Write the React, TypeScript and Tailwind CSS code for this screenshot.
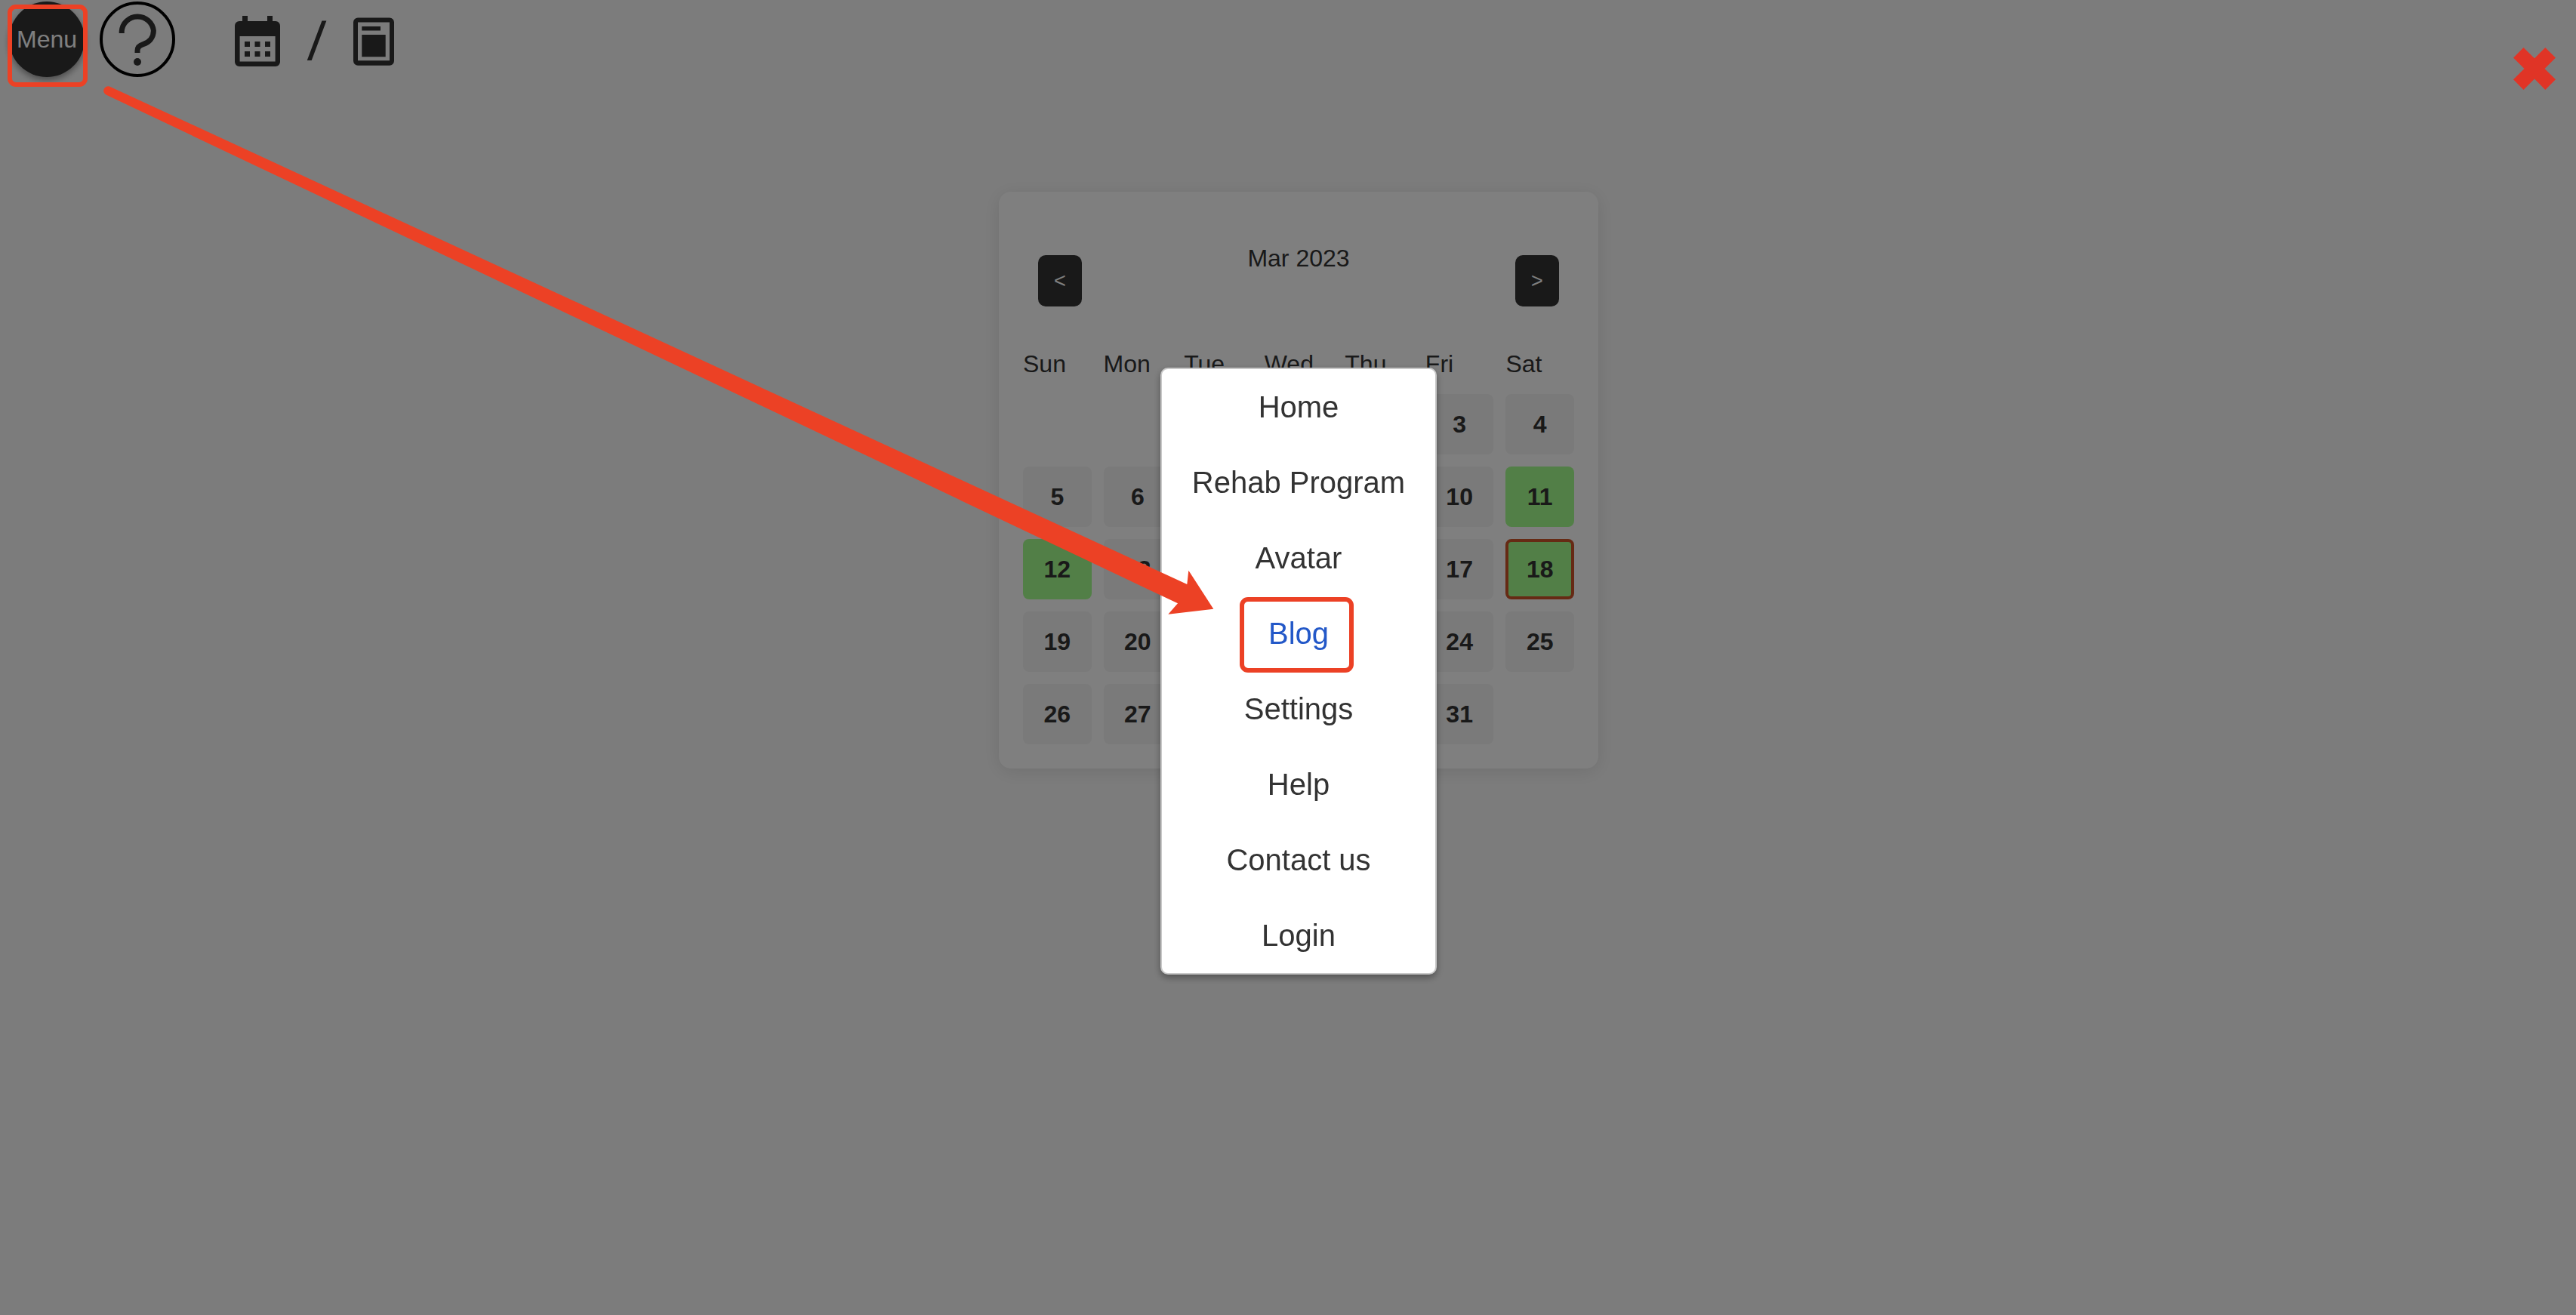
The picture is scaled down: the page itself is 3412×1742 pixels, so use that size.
import React from "react";

const WEEKDAYS = ["Sun", "Mon", "Tue", "Wed", "Thu", "Fri", "Sat"];
const FIRST_OFFSET = 3;
const DAYS = Array.from({ length: 31 }, (_, i) => i + 1);
const DONE = [11, 12, 18];
const TODAY = 18;

const MENU_ITEMS = [
  "Home",
  "Rehab Program",
  "Avatar",
  "Blog",
  "Settings",
  "Help",
  "Contact us",
  "Login",
];

function QuestionIcon() {
  return (
    <svg viewBox="0 0 100 100" className="h-full w-full" aria-hidden="true">
      <circle cx="50" cy="50" r="48" fill="none" stroke="#000" strokeWidth="4" />
      <path
        d="M29.2 42V39.6A21.2 21.2 0 0 1 71.4 38.6C71.4 48 65.5 54.2 57.6 56.6C53 58 50 60.4 50 65V68"
        fill="none"
        stroke="#333"
        strokeWidth="7"
      />
      <circle cx="50" cy="80" r="5" fill="#333" />
    </svg>
  );
}

function CalendarIcon() {
  return (
    <svg viewBox="0 0 60 68" className="h-[68px] w-[60px]" fill="#333" aria-hidden="true">
      <path d="M10 0h7v8h-7zM43 0h7v8h-7z" />
      <path
        fillRule="evenodd"
        d="M6 7H54a6 6 0 0 1 6 6V61a6 6 0 0 1-6 6H6a6 6 0 0 1-6-6V13a6 6 0 0 1 6-6zM6.600 27V60.600H53.600V27z"
      />
      <path d="M13 34h7v7h-7zM26.500 34h7v7h-7zM40 34h7v7h-7zM13 47h7v7h-7zM26.500 47h7v7h-7zM40 47h7v7h-7z" />
    </svg>
  );
}

function JournalIcon() {
  return (
    <svg viewBox="0 0 54 64" className="h-16 w-[54px]" fill="#333" aria-hidden="true">
      <path
        fillRule="evenodd"
        d="M6 .5H48a6 6 0 0 1 6 6V57.700a6 6 0 0 1-6 6H6a6 6 0 0 1-6-6V6.500a6 6 0 0 1 6-6zM6 6.600V57.300H48V6.600z"
      />
      <path d="M11.300 12h24.700v5.400h-24.700zM11.300 23h31.400v29.200h-31.400z" />
    </svg>
  );
}

function CloseIcon() {
  return (
    <svg viewBox="0 0 56 56" className="h-14 w-14" fill="#e03426" aria-hidden="true">
      <path d="M13.500 0L28 14.200L42.300 0L56 13.500L41.500 28L56 42.300L42.300 56L28 41.500L13.500 56L0 42.300L14.500 28L0 13.500z" />
    </svg>
  );
}

function TopBar() {
  return (
    <header className="flex h-[104px] items-start pl-3 pt-0.5">
      <button className="h-[100px] w-[100px] rounded-full bg-[#333] text-[32px] text-white shadow-[0_4px_8px_rgba(0,0,0,0.4)]">
        Menu
      </button>
      <button className="ml-5 h-[100px] w-[100px]" aria-label="Help">
        <QuestionIcon />
      </button>
      <nav className="ml-[79px] flex h-[106px] items-center">
        <a href="#calendar" aria-label="Calendar">
          <CalendarIcon />
        </a>
        <span className="mx-[35px] pb-1.5 font-['Open_Sans'] text-[74px] leading-[100px] text-[#333]">/</span>
        <a href="#journal" aria-label="Journal">
          <JournalIcon />
        </a>
      </nav>
    </header>
  );
}

function dayClass(day: number) {
  if (day === TODAY) return "h-20 rounded-lg border-4 border-[#cc5528] bg-[#a5fe8f] font-bold";
  if (DONE.includes(day)) return "h-20 rounded-lg bg-[#a5fe8f] font-bold";
  return "h-20 rounded-lg bg-[#f4f4f4] font-bold";
}

function MonthCard() {
  return (
    <section className="w-[794px] rounded-2xl bg-white p-8 shadow-[0_4px_24px_rgba(0,0,0,0.1)]">
      <div className="mb-[58px] flex items-start justify-between px-5 pt-[38px]">
        <button className="mt-3.5 h-[68px] w-[58px] rounded-[10px] bg-[#333] text-[27px] text-white">&lt;</button>
        <h2 className="leading-9">Mar 2023</h2>
        <button className="mt-3.5 h-[68px] w-[58px] rounded-[10px] bg-[#333] text-[27px] text-white">&gt;</button>
      </div>
      <div className="mb-[22px] grid grid-cols-7 gap-4 leading-9">
        {WEEKDAYS.map((d) => (
          <span key={d}>{d}</span>
        ))}
      </div>
      <div className="grid grid-cols-7 gap-4">
        {Array.from({ length: FIRST_OFFSET }, (_, i) => (
          <span key={i} />
        ))}
        {DAYS.map((d) => (
          <button key={d} className={dayClass(d)}>
            {d}
          </button>
        ))}
      </div>
    </section>
  );
}

function MenuDialog() {
  return (
    <nav className="rounded-[10px] border-2 border-[#c8c8c8] bg-white text-[40px] text-[#333] shadow-[0_4px_10px_rgba(0,0,0,0.35)]">
      <ul>
        {MENU_ITEMS.map((item) => (
          <li key={item} className="relative text-center leading-[100px]">
            <a
              href="#menu"
              className={item === "Blog" ? "block px-10 text-[#2358c8]" : "block px-10"}
            >
              {item}
            </a>
            {item === "Blog" && (
              <span className="absolute top-0.5 left-[103px] h-[100px] w-[151px] rounded-[11px] border-6 border-[#ec4125]" />
            )}
          </li>
        ))}
      </ul>
    </nav>
  );
}

function Annotations() {
  return (
    <div className="pointer-events-none absolute inset-0">
      <span className="absolute top-1.5 left-2.5 h-[109px] w-[106px] rounded-[11px] border-6 border-[#ec4125]" />
      <svg viewBox="0 0 1620 830" className="absolute top-0 left-0 h-[830px] w-[1620px]" fill="#ec4125" aria-hidden="true">
        <path d="M145 114.500L1572.300 774L1574.300 755.700L1607.300 806.700L1547.300 813.700L1560 799.300L141.500 126A6 6 0 0 1 145 114.500z" />
      </svg>
    </div>
  );
}

export default function App() {
  return (
    <div className="relative min-h-screen bg-[#f9f9f9] font-['Liberation_Sans',Arial,sans-serif] text-[32px] text-[#333]">
      <TopBar />
      <main className="flex justify-center pt-[150px] pl-7">
        <MonthCard />
      </main>
      <div className="fixed inset-0 bg-black/50">
        <div className="flex h-full items-center justify-center pt-9 pl-7">
          <MenuDialog />
        </div>
        <button className="absolute top-[63px] right-[27px]" aria-label="Close">
          <CloseIcon />
        </button>
        <Annotations />
      </div>
    </div>
  );
}
